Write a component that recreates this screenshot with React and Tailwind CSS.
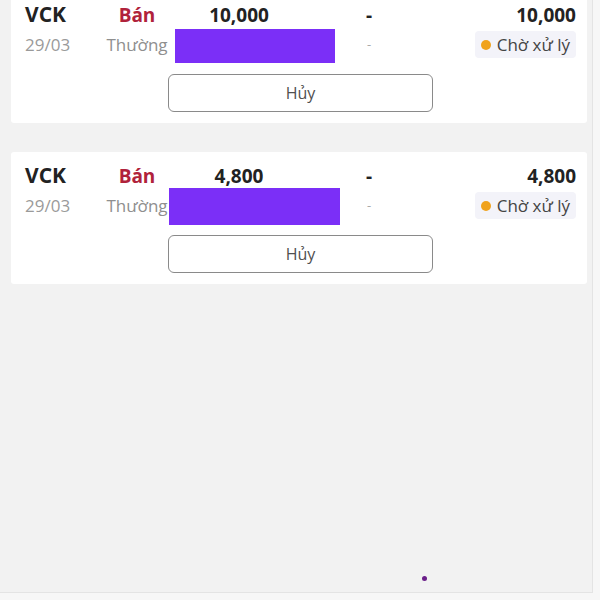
import React from "react";

const orders = [
  { code: "VCK", side: "Bán", qty: "10,000", price: "-", total: "10,000", date: "29/03", type: "Thường", mask: "left-[164px] top-[38px] w-[160px] h-[34px]" },
  { code: "VCK", side: "Bán", qty: "4,800", price: "-", total: "4,800", date: "29/03", type: "Thường", mask: "left-[158px] top-[36px] w-[171px] h-[37px]" },
];

const OrderCard = ({ order, className }) => (
  <div className={`relative bg-white rounded-[3px] pt-[8px] pb-[11px] pl-[14px] pr-[11px] ${className}`}>
    <div className="grid grid-cols-[80px_64px_140px_120px_1fr] items-center h-[28px]">
      <span className="text-[21px] font-bold text-[#222]">{order.code}</span>
      <span className="text-[19px] font-bold text-[#b0223b] text-center">{order.side}</span>
      <span className="text-[19px] font-bold text-[#222] text-center">{order.qty}</span>
      <span className="text-[19px] font-bold text-[#222] text-center">{order.price}</span>
      <span className="text-[19px] font-bold text-[#222] text-right">{order.total}</span>
    </div>
    <div className="grid grid-cols-[80px_64px_140px_120px_1fr] items-center h-[27px] mt-[4px]">
      <span className="text-[17px] text-[#9a9a9a]">{order.date}</span>
      <span className="text-[17px] text-[#8f8f8f] text-center">{order.type}</span>
      <span />
      <span className="text-[13px] text-[#aaa] text-center">-</span>
      <div className="flex justify-end">
        <span className="flex items-center gap-[6px] h-[27px] px-[6px] rounded-[4px] bg-[#f3f3f9] text-[17px] text-[#444]">
          <span className="w-[10px] h-[10px] rounded-full bg-[#f0a21c]" />
          Chờ xử lý
        </span>
      </div>
    </div>
    <div className="flex justify-center mt-[16px]">
      <button className="w-[265px] h-[38px] rounded-[6px] border-[1.5px] border-[#8a8a8a] bg-white text-[16px] text-[#505050]">
        Hủy
      </button>
    </div>
    <div className={`absolute bg-[#7b2ff7] ${order.mask}`} />
  </div>
);

export default function App() {
  return (
    <div className="w-[600px] h-[600px] overflow-hidden bg-[#f7f7f7] relative" style={{ fontFamily: '"Open Sans", "Noto Sans", sans-serif' }}>
      <div className="w-[593px] h-[593px] bg-[#f2f2f2] border-r border-b border-[#e4e4e4] pl-[11px] pr-[5px] flex flex-col gap-[29px]">
        <OrderCard order={orders[0]} className="-mt-[9px]" />
        <OrderCard order={orders[1]} />
      </div>
      <span className="absolute left-[422px] top-[576px] w-[5px] h-[5px] rounded-full bg-[#6b1f8a]" />
    </div>
  );
}
